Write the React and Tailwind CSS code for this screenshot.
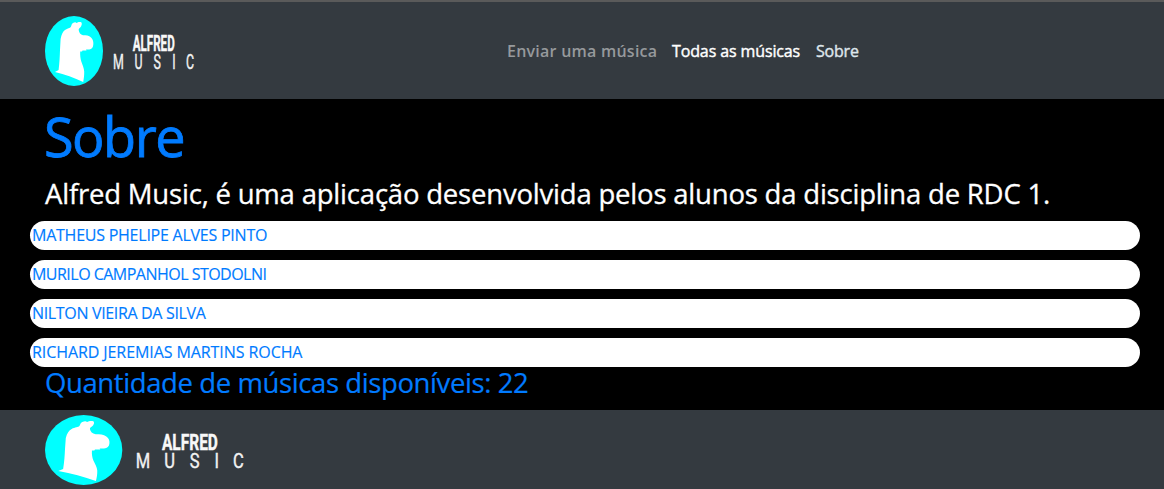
function Logo({ className }) {
  return (
    <svg className={className} viewBox="0 0 150 70" preserveAspectRatio="none" role="img">
      <ellipse cx="29" cy="35" rx="29" ry="35" fill="#00ffff" />
      <path
        fill="#fff"
        d="M10 56 L13.6 54 C14.5 47 14.8 40 15 34 L15.6 23 C16.5 18 18 15.5 20 14 C22.5 12 25 12.5 25.8 11 C26.5 9.5 26.5 8 28 7 C29.5 6 30.8 5.8 31.5 7 C32.5 6.3 34.5 5.6 36.2 6.2 C37.2 7 36.8 9 36 10.5 C35 12 33.5 12.5 33.7 14 C34 16.5 35.5 18.8 38 19.3 C41 19.3 44 19.3 46 21.5 C48 23.5 48.6 26 48.3 28.5 C48.2 31.5 46.7 33.3 44.3 33.4 L41 33.5 L41.5 34.4 L37.5 34.4 L37 35.4 L35.2 35.4 C35 39 35.4 42.5 36.3 45.5 C37.5 49 39 52 39.2 55.5 C39.3 59 38.8 63 38.2 66 C29 61.5 20 58.5 10 56 Z"
      />
      <text x="87.7" y="34.7" textLength="42" lengthAdjust="spacingAndGlyphs" fill="#f8f8f8" stroke="#f8f8f8" strokeWidth=".4" className="font-['Roboto',sans-serif] text-[21.5px] font-bold">
        ALFRED
      </text>
      <text transform="scale(.62 1)" x="109.8 144.3 175 205.2 227.5" y="53.2" fill="#f2f2f2" stroke="#f2f2f2" strokeWidth=".4" className="font-['Roboto',sans-serif] text-[20px]">
        MUSIC
      </text>
    </svg>
  );
}

const names = [
  { name: "MATHEUS PHELIPE ALVES PINTO", tracking: "tracking-[-0.24px]" },
  { name: "MURILO CAMPANHOL STODOLNI", tracking: "tracking-[-0.52px]" },
  { name: "NILTON VIEIRA DA SILVA", tracking: "tracking-[-0.34px]" },
  { name: "RICHARD JEREMIAS MARTINS ROCHA", tracking: "tracking-[-0.08px]" },
];

export default function App() {
  return (
    <div className="flex h-[489px] w-[1164px] flex-col overflow-hidden bg-black font-['Open_Sans','Noto_Sans',sans-serif] text-[#007bff]">
      <header className="flex h-[99px] shrink-0 items-start border-t-2 border-[#5a5a5a] bg-[#343a40] pl-[45px] pt-[14px]">
        <Logo className="h-[70px] w-[150px] shrink-0" />
        <nav className="ml-[312px] flex h-[70px] items-center gap-4 whitespace-nowrap text-base">
          <a className="w-[149px] font-semibold tracking-[0.24px] text-[#96999c]">Enviar uma música</a>
          <a className="w-[128px] tracking-[-0.12px] text-white [-webkit-text-stroke:0.4px]">Todas as músicas</a>
          <a className="tracking-[-0.2px] text-[#dfe6ec] [-webkit-text-stroke:0.4px]">Sobre</a>
        </nav>
      </header>
      <main className="flex h-[311px] shrink-0 flex-col whitespace-nowrap pl-[30px] pr-6">
        <h1 className="h-[75px] pl-[14px] text-[54px] leading-[74px] tracking-[-1.5px] [-webkit-text-stroke:0.8px]">Sobre</h1>
        <h2 className="h-[47px] pl-[15px] text-[27.5px] leading-[39px] tracking-[-0.2px] text-white [-webkit-text-stroke:0.3px]">
          Alfred Music, é uma aplicação desenvolvida pelos alunos da disciplina de RDC 1.
        </h2>
        <ul className="flex flex-col gap-[10px]">
          {names.map(({ name, tracking }) => (
            <li key={name} className={`h-[29px] rounded-[15px] bg-white pl-[2px] text-base leading-[29px] [-webkit-text-stroke:0.15px] ${tracking}`}>
              {name}
            </li>
          ))}
        </ul>
        <p className="pl-[15px] text-[27.5px] leading-[31px] tracking-[-0.4px] [-webkit-text-stroke:0.2px]">
          Quantidade de músicas disponíveis: 22
        </p>
      </main>
      <footer className="h-[79px] shrink-0 bg-[#343a40] pl-[45px] pt-[5px]">
        <Logo className="h-[70px] w-[200px]" />
      </footer>
    </div>
  );
}
